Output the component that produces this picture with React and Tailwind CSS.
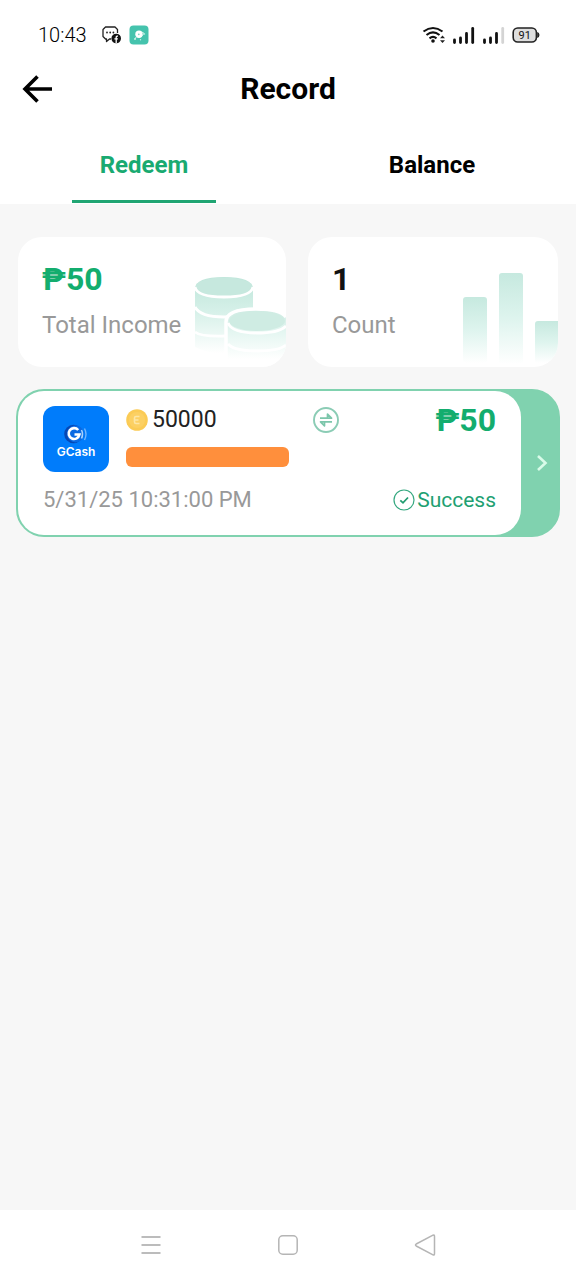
import React from 'react';

function ChatIcon() {
  return (
    <svg className="h-5 w-5" viewBox="0 0 20 20" fill="none" aria-hidden="true">
      <path d="M10 14H8.500L5.500 16.500V14H4.500L2 11.500V4.500L4.500 2H14L16.500 4.500V8" stroke="#222" strokeWidth="1.300" strokeLinejoin="round" />
      <circle cx="6" cy="7.500" r="0.900" fill="#222" />
      <circle cx="9.200" cy="7.500" r="0.900" fill="#222" />
      <circle cx="12.400" cy="7.500" r="0.900" fill="#222" />
      <circle cx="15.200" cy="13.500" r="4.800" fill="#111" />
      <path d="M15.200 18V12.200Q15.200 11 17 11.200M13.400 13.900H16.900" stroke="#fff" strokeWidth="1.300" />
    </svg>
  );
}

function AppBadge() {
  return (
    <svg className="h-5 w-5" viewBox="0 0 20 20" fill="none" aria-hidden="true">
      <rect x="0.500" y="0.500" width="19" height="19" rx="4" fill="#45c3ad" />
      <circle cx="10" cy="9.300" r="3.700" fill="#fff" />
      <circle cx="9.800" cy="9.300" r="0.900" fill="#7bd6c6" />
      <path d="M12.500 6.800L15 8.300L13 11M7.500 11.500L6 14" stroke="#d5f4ed" strokeWidth="1" />
      <circle cx="6" cy="14" r="1" fill="#c4efe6" />
      <circle cx="11.500" cy="14.700" r="0.700" fill="#c4efe6" />
      <circle cx="15.500" cy="9" r="0.700" fill="#c4efe6" />
    </svg>
  );
}

function WifiIcon() {
  return (
    <svg className="h-5 w-6" viewBox="0 0 24 20" fill="none" aria-label="Wi-Fi" role="img">
      <path d="M1.500 6.500Q11 -0.500 20.500 6.500M4.500 10Q11 4.800 17.500 10M7.500 13.300Q11 10.600 14.500 13.300" stroke="#111" strokeWidth="2.100" />
      <circle cx="11" cy="16" r="1.800" fill="#111" />
      <path d="M18 13.200L20.500 10.400L23 13.200ZM18 15.300L20.500 18L23 15.300Z" fill="#222" />
    </svg>
  );
}

function SignalIcon({ weak }) {
  return (
    <svg className="h-5 w-6" viewBox="0 0 24 20" fill="none" aria-label="Signal" role="img">
      <path d="M2.500 15V17.500M8.500 13V17.500M14.500 8.500V17.500" stroke="#111" strokeWidth="2.800" strokeLinecap="round" />
      <path d="M20.700 3.500V17.500" stroke={weak ? '#d4d4d4' : '#111'} strokeWidth="2.800" strokeLinecap="round" />
    </svg>
  );
}

function BatteryIcon() {
  return (
    <svg className="h-5 w-7" viewBox="0 0 28 20" aria-label="Battery 91 percent" role="img">
      <rect x="1.200" y="3" width="23.200" height="14" rx="4.500" fill="#dedede" stroke="#222" strokeWidth="1.600" />
      <path d="M25.200 7Q27.500 7.500 27.500 10Q27.500 12.500 25.200 13Z" fill="#222" />
      <text x="12.800" y="14" textAnchor="middle" fontFamily="Roboto, sans-serif" fontSize="11" fill="#111">91</text>
    </svg>
  );
}

function CoinsArt() {
  return (
    <svg className="h-[92px] w-[94px]" viewBox="0 0 94 92" fill="none" aria-hidden="true">
      <defs>
        <linearGradient id="coinSide" x1="0" y1="0" x2="0" y2="78" gradientUnits="userSpaceOnUse">
          <stop stopColor="#bde5d9" />
          <stop offset="0.450" stopColor="#d5f0e8" />
          <stop offset="1" stopColor="#ffffff" />
        </linearGradient>
        <linearGradient id="coinFront" x1="0" y1="34" x2="0" y2="84" gradientUnits="userSpaceOnUse">
          <stop stopColor="#cdebe2" />
          <stop offset="0.450" stopColor="#e4f6f1" />
          <stop offset="1" stopColor="#ffffff" />
        </linearGradient>
      </defs>
      <path d="M3 14Q3 2 32 2Q61 2 61 14V72Q32 86 3 72Z" fill="url(#coinSide)" />
      <ellipse cx="32" cy="12" rx="28.500" ry="9.500" fill="#c6e8de" />
      <path d="M3 12Q5 22 32 22Q59 22 61 12" stroke="#fff" strokeWidth="2.800" />
      <path d="M3 32Q8 42 32 42Q47 42 53 38M3 57Q9 62 34 61" stroke="#fff" strokeWidth="2.800" />
      <path d="M34 47Q34 34 64 34Q93 34 94 44V92H34Z" fill="url(#coinFront)" />
      <path d="M34 92V47Q34 34 64 34Q88 34 94 42" stroke="#fff" strokeWidth="3.500" />
      <ellipse cx="65" cy="46" rx="28" ry="10" fill="#cfece3" />
      <path d="M36 48Q40 58 65 58Q87 58 94 51M36 69Q42 76 65 76Q87 76 94 70" stroke="#fff" strokeWidth="2.800" />
    </svg>
  );
}

function BarsArt() {
  return (
    <svg className="h-[94px] w-[95px]" viewBox="0 0 95 94" aria-hidden="true">
      <defs>
        <linearGradient id="bar" x1="0" y1="0" x2="0" y2="1">
          <stop stopColor="#c6e9df" />
          <stop offset="0.500" stopColor="#def4ee" />
          <stop offset="1" stopColor="#ffffff" />
        </linearGradient>
      </defs>
      <rect x="0" y="24" width="24" height="66" rx="3" fill="url(#bar)" />
      <rect x="36" y="0" width="24" height="91" rx="3" fill="url(#bar)" />
      <rect x="72" y="48" width="28" height="42" rx="3" fill="url(#bar)" />
    </svg>
  );
}

function GCashLogo() {
  return (
    <div className="flex h-[66px] w-[66px] shrink-0 flex-col items-center justify-center rounded-xl bg-[#007cfb] pt-1.5">
      <svg className="h-5 w-6" viewBox="0 0 24 20" fill="none" aria-hidden="true">
        <circle cx="9.500" cy="10" r="9.300" fill="#0647b4" />
        <circle cx="11.500" cy="10" r="8.500" fill="#0a69e2" />
        <path d="M14.200 6A5.400 5.400 0 1 0 15.400 10.500H10.500" stroke="#fff" strokeWidth="2.600" />
        <path d="M17.500 6Q19.500 10 17.500 14.500" stroke="#a5d2ff" strokeWidth="1.600" />
        <path d="M20.500 4.500Q23.500 10 20.500 16" stroke="#72b5ff" strokeWidth="1.400" />
      </svg>
      <span className="font-[Inter,sans-serif] text-xs leading-4 font-semibold text-white">GCash</span>
    </div>
  );
}

function CoinIcon() {
  return (
    <svg className="h-[22px] w-[22px]" viewBox="0 0 22 22" fill="none" aria-hidden="true">
      <circle cx="11" cy="11" r="10.800" fill="#fbcb55" />
      <circle cx="11" cy="11" r="8" fill="#fcd063" />
      <path d="M13.500 7.500H10Q8.500 7.500 8.500 9V13Q8.500 14.500 10 14.500H13.500M9 11H12.500" stroke="#fde6a5" strokeWidth="1.600" />
    </svg>
  );
}

function ExchangeIcon() {
  return (
    <svg className="h-[26px] w-[26px]" viewBox="0 0 26 26" fill="none" aria-hidden="true">
      <circle cx="13" cy="13" r="12" stroke="#8bccb5" strokeWidth="1.900" />
      <path d="M7 11.200H18.500L14.500 7.200V11M19 14.800H7.500L11.500 18.800V15" stroke="#7cc6ab" strokeWidth="1.700" strokeLinejoin="round" />
    </svg>
  );
}

function CheckIcon() {
  return (
    <svg className="h-[22px] w-[22px]" viewBox="0 0 22 22" fill="none" aria-hidden="true">
      <circle cx="11" cy="11" r="10" stroke="#36a880" strokeWidth="1.200" />
      <path d="M7.300 11.300L10 13.800L15 8.500" stroke="#219c70" strokeWidth="1.800" />
    </svg>
  );
}

function StatCard({ value, label, valueClass, cardClass, children }) {
  return (
    <section className={`relative h-[130px] overflow-hidden rounded-3xl bg-white px-6 pt-6 ${cardClass}`}>
      <div className="absolute right-0 bottom-0">{children}</div>
      <p className={`relative text-[32px] leading-9 font-bold ${valueClass}`}>{value}</p>
      <p className="relative mt-3 text-2xl leading-8 text-[#999]">{label}</p>
    </section>
  );
}

export default function App() {
  return (
    <div className="flex min-h-screen flex-col bg-[#f7f7f7] font-[Roboto,sans-serif] text-[#111]">
      <div className="bg-white">
        <div className="flex h-14 items-center justify-between pt-3.5 pr-9 pl-[38px]">
          <div className="flex items-center">
            <span className="text-xl leading-6 font-light text-black">10:43</span>
            <span className="ml-3.5"><ChatIcon /></span>
            <span className="ml-2"><AppBadge /></span>
          </div>
          <div className="flex items-center gap-1.5">
            <WifiIcon />
            <SignalIcon />
            <SignalIcon weak />
            <BatteryIcon />
          </div>
        </div>
        <header className="grid h-[66px] grid-cols-[56px_1fr_56px] items-center">
          <button type="button" aria-label="Back" className="flex h-12 items-center justify-end pr-1">
            <svg className="h-8 w-8" viewBox="0 0 32 32" fill="none">
              <path d="M32 16H5M17.500 3.500L5 16L17.500 28.500" stroke="#000" strokeWidth="3.600" />
            </svg>
          </button>
          <h1 className="text-center text-3xl leading-9 font-bold text-black">Record</h1>
        </header>
        <nav className="grid h-[82px] grid-cols-2" role="tablist" aria-label="Records">
          <button type="button" role="tab" aria-selected="true" className="flex flex-col items-center text-2xl leading-8 font-bold text-[#19aa71]">
            <span className="flex flex-1 items-center pt-2">Redeem</span>
            <span className="mb-px h-[3px] w-1/2 bg-[#20a573]" />
          </button>
          <button type="button" role="tab" aria-selected="false" className="flex flex-col items-center text-2xl leading-8 font-bold text-black">
            <span className="mb-1 flex flex-1 items-center pt-2">Balance</span>
          </button>
        </nav>
      </div>

      <main className="flex-1 px-4 pt-[33px]">
        <div className="mx-0.5 grid grid-cols-[268fr_250fr] gap-[22px]">
          <StatCard value="₱50" label="Total Income" valueClass="text-[#13ad6e]">
            <CoinsArt />
          </StatCard>
          <StatCard value="1" label="Count" valueClass="text-[#111]">
            <BarsArt />
          </StatCard>
        </div>

        <article className="mt-[22px] flex rounded-[28px] border-2 border-[#80d2af] bg-[#80d2af]">
          <div className="min-w-0 flex-1 rounded-[26px] bg-white pt-[15px] pr-[25px] pb-[19px] pl-[25px]">
            <div className="flex">
              <GCashLogo />
              <div className="ml-[17px] min-w-0 flex-1">
                <div className="flex h-7 items-center">
                  <CoinIcon />
                  <span className="ml-1 text-[23px] leading-7 text-[#222]">50000</span>
                </div>
                <div className="mt-[13px] h-5 w-[163px] rounded-md bg-[#ff8f3c]" />
              </div>
              <div className="flex h-7 w-[183px] items-center justify-between">
                <ExchangeIcon />
                <span className="text-[32px] leading-8 font-bold text-[#13ad6e]">₱50</span>
              </div>
            </div>
            <div className="mt-3 flex items-center justify-between leading-8">
              <time className="text-[22px] text-[#999]">5/31/25 10:31:00 PM</time>
              <span className="flex items-center gap-0.5 text-[21px] text-[#219f71]">
                <CheckIcon />
                Success
              </span>
            </div>
          </div>
          <button type="button" aria-label="Open record" className="flex w-[37px] items-center justify-center">
            <svg className="ml-1 h-4 w-3" viewBox="0 0 12 16" fill="none">
              <path d="M2 1L9.500 8L2 15" stroke="#d9fbe9" strokeWidth="2.600" />
            </svg>
          </button>
        </article>
      </main>

      <footer className="flex h-[70px] items-center justify-center gap-[113px] bg-white">
        <button type="button" aria-label="Recent apps">
          <svg className="h-6 w-6" viewBox="0 0 24 24" fill="none">
            <path d="M2.500 4H21.500M2.500 12H21.500M2.500 20H21.500" stroke="#bcbcbc" strokeWidth="1.800" />
          </svg>
        </button>
        <button type="button" aria-label="Home">
          <svg className="h-6 w-6" viewBox="0 0 24 24" fill="none">
            <rect x="2.800" y="2.800" width="18.400" height="18.400" rx="4" stroke="#b5b5b5" strokeWidth="1.500" />
          </svg>
        </button>
        <button type="button" aria-label="Go back">
          <svg className="h-6 w-6" viewBox="0 0 24 24" fill="none">
            <path d="M20 2.200Q21.500 1.500 21.500 3.500V20.500Q21.500 22.500 20 21.800L3.200 13Q1.800 12 3.200 11Z" stroke="#b5b5b5" strokeWidth="1.500" strokeLinejoin="round" />
          </svg>
        </button>
      </footer>
    </div>
  );
}
